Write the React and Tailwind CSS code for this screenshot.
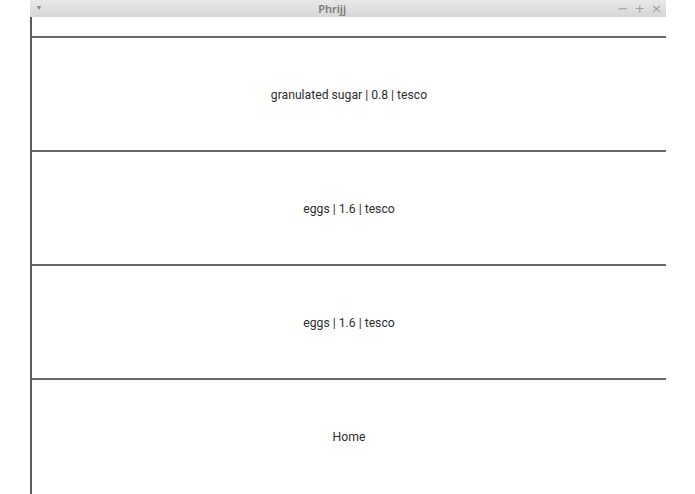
import React from "react";

const items = [
  "granulated sugar | 0.8 | tesco",
  "eggs | 1.6 | tesco",
  "eggs | 1.6 | tesco",
];

const Row = ({ label, last }) => (
  <div
    className={`h-[114px] shrink-0 flex items-center justify-center ${
      last ? "" : "pt-[2px] border-b-2 border-[#686868]"
    }`}
  >
    <span className="text-[12.2px] text-[#2e2e2e]">{label}</span>
  </div>
);

const TitleBar = () => (
  <div className="h-[17px] shrink-0 flex items-center bg-gradient-to-b from-[#e8e8e8] to-[#d6d6d6] text-[#888]">
    <span className="w-[16px] ml-[1px] text-center text-[7px] leading-none text-[#8a8a8a]">▼</span>
    <span className="flex-1 text-center text-[11px] font-semibold text-[#7a7a7a] font-['Noto_Sans',sans-serif] leading-none">
      Phrijj
    </span>
    <div className="flex items-center gap-[6px] pr-[4px] text-[13px] leading-none text-[#a0a0a0] font-['DejaVu_Sans',sans-serif]">
      <span>−</span>
      <span>+</span>
      <span>×</span>
    </div>
  </div>
);

export default function App() {
  return (
    <div className="w-[695px] h-[494px] overflow-hidden bg-white font-['Roboto',sans-serif]">
      <div className="ml-[30px] w-[636px] h-full flex flex-col">
        <TitleBar />
        <div className="flex-1 flex flex-col border-l-2 border-[#5a5a5a] overflow-hidden">
          <div className="h-[21px] shrink-0 border-b-2 border-[#686868]" />
          {items.map((label, i) => (
            <Row key={i} label={label} />
          ))}
          <Row label="Home" last />
        </div>
      </div>
    </div>
  );
}
